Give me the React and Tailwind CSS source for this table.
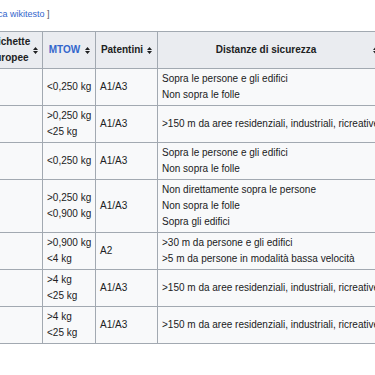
const rows = [
  { mtow: ["<0,250 kg"], pat: "A1/A3", dist: ["Sopra le persone e gli edifici", "Non sopra le folle"] },
  { mtow: [">0,250 kg", "<25 kg"], pat: "A1/A3", dist: [">150 m da aree residenziali, industriali, ricreative"] },
  { mtow: ["<0,250 kg"], pat: "A1/A3", dist: ["Sopra le persone e gli edifici", "Non sopra le folle"] },
  {
    mtow: [">0,250 kg", "<0,900 kg"],
    pat: "A1/A3",
    dist: ["Non direttamente sopra le persone", "Non sopra le folle", "Sopra gli edifici"],
  },
  {
    mtow: [">0,900 kg", "<4 kg"],
    pat: "A2",
    dist: [">30 m da persone e gli edifici", ">5 m da persone in modalità bassa velocità"],
  },
  { mtow: [">4 kg", "<25 kg"], pat: "A1/A3", dist: [">150 m da aree residenziali, industriali, ricreative"] },
  { mtow: [">4 kg", "<25 kg"], pat: "A1/A3", dist: [">150 m da aree residenziali, industriali, ricreative"] },
];

function SortIcon() {
  return (
    <svg width="5" height="7" viewBox="0 0 5 7" className="ml-[3px] shrink-0">
      <path d="M0 3 L2.5 0 L5 3 Z M0 4 L2.5 7 L5 4 Z" fill="#202122" />
    </svg>
  );
}

function Th({ children, link }) {
  return (
    <th className="border border-[#a2a9b1] bg-[#eaecf0] pl-[4px] pr-[5px] py-[2px] font-bold align-middle">
      <div className="flex items-center">
        <span className={"flex-1 text-center " + (link ? "text-[#3366cc]" : "")}>{children}</span>
        <SortIcon />
      </div>
    </th>
  );
}

export default function App() {
  return (
    <div className="w-[375px] h-[375px] overflow-hidden bg-white text-[#202122] font-['Liberation_Sans',Arial,sans-serif]">
      <div className="pt-[8px] -ml-[72px] text-[9px] leading-[12px] whitespace-nowrap">
        <span className="text-[#54595d]">[ </span>
        <span className="text-[#3366cc]">modifica</span>
        <span className="text-[#54595d]"> | </span>
        <span className="text-[#3366cc]">modifica wikitesto</span>
        <span className="text-[#54595d]"> ]</span>
      </div>

      <table className="mt-[11px] -ml-[17px] w-[400px] table-fixed border-collapse text-[10px] leading-[16px]">
        <colgroup>
          <col className="w-[59px]" />
          <col className="w-[53px]" />
          <col className="w-[62px]" />
          <col className="w-[226px]" />
        </colgroup>
        <thead>
          <tr>
            <Th>
              Etichette
              <br />
              europee
            </Th>
            <Th link>MTOW</Th>
            <Th>Patentini</Th>
            <Th>Distanze di sicurezza</Th>
          </tr>
        </thead>
        <tbody>
          {rows.map((r, i) => (
            <tr key={i} className="bg-[#f8f9fa]">
              <td className="border border-[#a2a9b1] px-[4px] py-[2px]"></td>
              <td className="border border-[#a2a9b1] px-[4px] py-[2px] align-middle whitespace-nowrap">
                {r.mtow.map((t, j) => (
                  <div key={j}>{t}</div>
                ))}
              </td>
              <td className="border border-[#a2a9b1] px-[4px] py-[2px] align-middle">{r.pat}</td>
              <td className="border border-[#a2a9b1] px-[4px] py-[2px] align-middle whitespace-nowrap">
                {r.dist.map((t, j) => (
                  <div key={j}>{t}</div>
                ))}
              </td>
            </tr>
          ))}
        </tbody>
      </table>
    </div>
  );
}
